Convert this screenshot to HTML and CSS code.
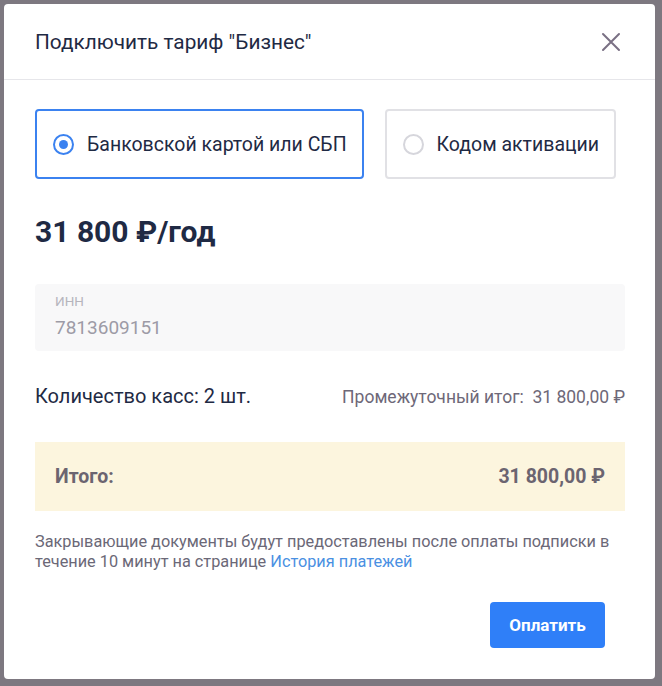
FILE: index.html
```html
<!DOCTYPE html>
<html lang="ru">
<head>
    <meta charset="UTF-8">
    <meta name="viewport" content="width=device-width, initial-scale=1.0">
    <title>Подключить тариф</title>
    <link rel="stylesheet" href="styles.css">
</head>
<body>
    <div class="overlay">
        <div class="modal">
            <div class="modal-header">
                <h2>Подключить тариф "Бизнес"</h2>
                <button class="close" aria-label="Закрыть">
                    <svg width="20" height="20" viewBox="0 0 20 20">
                        <path d="M2 2 L18 18 M18 2 L2 18" stroke="#7a7084" stroke-width="2" stroke-linecap="round"/>
                    </svg>
                </button>
            </div>
            <div class="modal-body">
                <div class="methods">
                    <label class="method active">
                        <span class="radio"></span>
                        Банковской картой или СБП
                    </label>
                    <label class="method">
                        <span class="radio"></span>
                        Кодом активации
                    </label>
                </div>

                <div class="price">31 800 ₽/год</div>

                <div class="field">
                    <div class="field-label">ИНН</div>
                    <div class="field-value">7813609151</div>
                </div>

                <div class="summary">
                    <span class="count">Количество касс: 2 шт.</span>
                    <span class="subtotal">Промежуточный итог:&nbsp; 31 800,00 ₽</span>
                </div>

                <div class="total">
                    <span>Итого:</span>
                    <span>31 800,00 ₽</span>
                </div>

                <p class="note">
                    Закрывающие документы будут предоставлены после оплаты подписки в<br>
                    течение 10 минут на странице <a href="#">История платежей</a>
                </p>
            </div>
            <div class="modal-footer">
                <button class="pay">Оплатить</button>
            </div>
        </div>
    </div>
</body>
</html>
```

FILE: styles.css
```css
body {
    margin: 0;
    font-family: Roboto, "Liberation Sans", Arial, sans-serif;
    background-color: #7d7880;
    height: 100vh;
}
.overlay {
    padding: 4px 7px 7px 4px;
}
.modal {
    background: white;
    border-radius: 4px;
    height: 675px;
    display: flex;
    flex-direction: column;
}
.modal-header {
    display: flex;
    align-items: center;
    justify-content: space-between;
    height: 75px;
    padding: 0 34px 0 31px;
    border-bottom: 1px solid #e6e6ea;
}
.modal-header h2 {
    margin: 0;
    font-size: 20.8px;
    font-weight: 400;
    color: #1f2a44;
}
.close {
    border: none;
    background: none;
    padding: 0;
    width: 20px;
    height: 20px;
    cursor: pointer;
}
.modal-body {
    padding: 29px 30px 0 31px;
}
.methods {
    display: flex;
    gap: 21px;
}
.method {
    display: flex;
    align-items: center;
    gap: 13px;
    height: 66px;
    padding: 0 15px 0 16px;
    border: 2px solid #e1e1e5;
    border-radius: 4px;
    font-size: 19.5px;
    color: #1f2a44;
    cursor: pointer;
}
.method.active {
    border-color: #3b82f0;
}
.radio {
    width: 17px;
    height: 17px;
    border: 2px solid #d6d6dc;
    border-radius: 50%;
    box-sizing: content-box;
    position: relative;
}
.method.active .radio {
    border-color: #3b82f0;
}
.method.active .radio::after {
    content: "";
    position: absolute;
    left: 4px;
    top: 4px;
    width: 9px;
    height: 9px;
    border-radius: 50%;
    background: #3b82f0;
}
.price {
    margin-top: 35px;
    font-size: 30px;
    font-weight: 700;
    color: #1f2a44;
}
.field {
    margin-top: 35px;
    height: 67px;
    box-sizing: border-box;
    background: #f8f8f9;
    border-radius: 4px;
    padding: 9px 20px 0;
}
.field-label {
    font-size: 13.5px;
    color: #b6b5bd;
}
.field-value {
    margin-top: 7px;
    font-size: 19px;
    color: #9d9ba6;
}
.summary {
    display: flex;
    justify-content: space-between;
    align-items: baseline;
    margin-top: 33px;
}
.count {
    font-size: 20px;
    color: #1f2a44;
}
.subtotal {
    font-size: 17.5px;
    color: #6e6878;
}
.total {
    margin-top: 34px;
    height: 69px;
    background: #fcf5de;
    display: flex;
    align-items: center;
    justify-content: space-between;
    padding: 0 20px;
    font-size: 19.5px;
    font-weight: 700;
    color: #6b6470;
}
.note {
    margin: 21px 0 0;
    font-size: 16.3px;
    line-height: 20px;
    color: #6b6877;
}
.note a {
    color: #4a90e2;
    text-decoration: none;
}
.modal-footer {
    display: flex;
    justify-content: flex-end;
    padding: 30px 50px 0 0;
}
.pay {
    width: 115px;
    height: 46px;
    border: none;
    border-radius: 4px;
    background-color: #2f7ff8;
    color: white;
    font-family: inherit;
    font-size: 17px;
    font-weight: 700;
    cursor: pointer;
}
```
